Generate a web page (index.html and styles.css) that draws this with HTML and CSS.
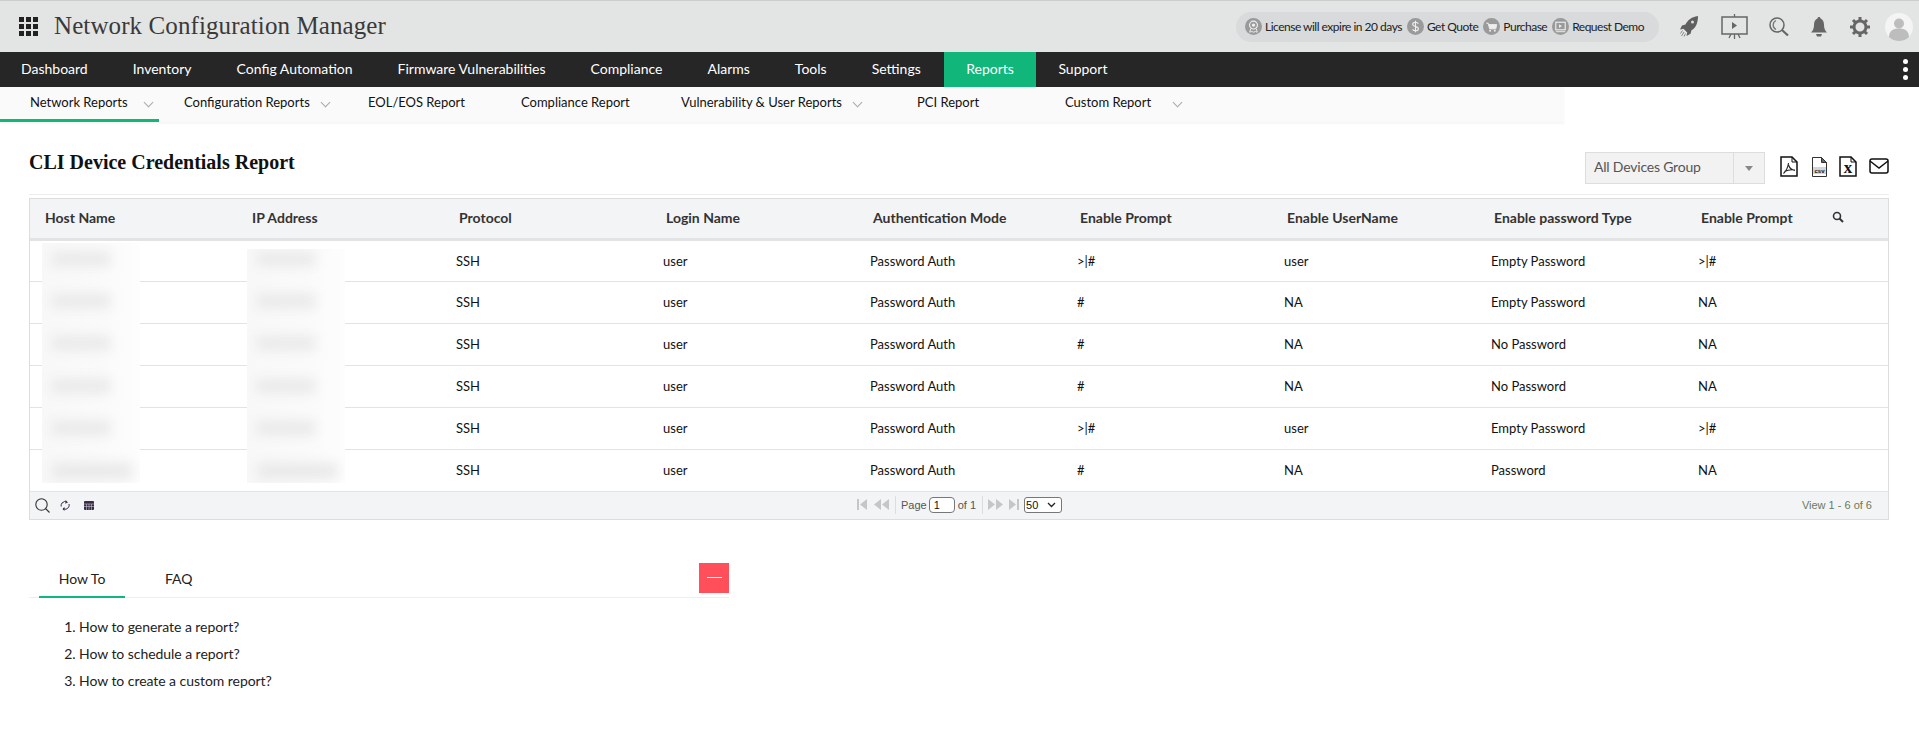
FILE: index.html
```html
<!DOCTYPE html>
<html lang="en">
<head>
  <meta charset="UTF-8">
  <title>CLI Device Credentials Report</title>
  <link rel="stylesheet" href="styles.css">
</head>
<body>
  <header class="topbar">
    <div class="brand">
      <div class="apps"><i></i><i></i><i></i><i></i><i></i><i></i><i></i><i></i><i></i></div>
      <span class="product">Network Configuration Manager</span>
    </div>
    <div class="top-right">
      <div class="pill">
        <span class="pill-item">
          <svg class="pill-ico" viewBox="0 0 18 18"><circle cx="9" cy="9" r="9" fill="#9a9a9a"/><circle cx="9" cy="7.5" r="4.2" fill="none" stroke="#eee" stroke-width="1.2"/><circle cx="9" cy="7.5" r="1.8" fill="#eee"/><path d="M6 11.5L5 15l2-.7L9 15l2-.7 2 .7-1-3.5" fill="none" stroke="#eee"/></svg>
          License will expire in 20 days
        </span>
        <span class="pill-item">
          <svg class="pill-ico" viewBox="0 0 18 18"><circle cx="9" cy="9" r="9" fill="#9a9a9a"/><path d="M12 6c-.5-1-1.600-1.500-3-1.500-1.700 0-3 .8-3 2.200 0 3 6 1.600 6 4.600 0 1.400-1.300 2.200-3 2.200-1.500 0-2.600-.6-3.100-1.700M9 3v12" fill="none" stroke="#eee" stroke-width="1.200"/></svg>
          Get Quote
        </span>
        <span class="pill-item">
          <svg class="pill-ico" viewBox="0 0 18 18"><circle cx="9" cy="9" r="9" fill="#9a9a9a"/><path d="M3.500 5.500h2l1.500 6h6.500l1-4.500H6" fill="#eee" stroke="#eee"/><circle cx="7.500" cy="13.500" r="1" fill="#eee"/><circle cx="12.500" cy="13.500" r="1" fill="#eee"/></svg>
          Purchase
        </span>
        <span class="pill-item">
          <svg class="pill-ico" viewBox="0 0 18 18"><circle cx="9" cy="9" r="9" fill="#9a9a9a"/><rect x="4" y="4.500" width="10" height="8" fill="none" stroke="#eee" stroke-width="1.200"/><path d="M7.500 6.500v4l3-2z" fill="#eee"/><path d="M4 14.500h10" stroke="#eee"/></svg>
          Request Demo
        </span>
      </div>
      <div class="tools">
        <svg class="tool-rocket" viewBox="0 0 18 21"><path d="M18 0C11 1 7.500 4.500 5.500 8.500L2 9.500 0 13.500l3.500-.7 3.700 3.700-.7 3.500 4-2.200 1-3.500C16 12 18 6.500 18 0z" fill="#5f5f5f"/><circle cx="12.500" cy="6" r="1.500" fill="#ddd"/><path d="M2.500 14.500L.5 17.500M4 16L1.500 20M5.500 17.500L4 20.500" stroke="#8a8a8a" fill="none"/></svg>
        <svg class="tool-screen" viewBox="0 0 27 25"><path d="M13.500 0v3M13.500 20v5M8 24l2-4M19 24l-2-4" stroke="#666" stroke-width="1.300" fill="none"/><rect x="1" y="3" width="25" height="17" fill="#e3e4e4" stroke="#666" stroke-width="1.500"/><path d="M11 8v7l5-3.500z" fill="#666"/></svg>
        <svg class="tool-search" viewBox="0 0 20 19"><circle cx="8" cy="8" r="7" fill="none" stroke="#666" stroke-width="1.500"/><path d="M7 3.500a5 5 0 0 0 0 9" fill="none" stroke="#777" stroke-width="1.300"/><path d="M13 13l6 5.500" stroke="#666" stroke-width="2.200"/></svg>
        <svg class="tool-bell" viewBox="0 0 16 20"><path d="M8 0c1 0 1.500.7 1.500 1.600C12 2.500 13 5 13 8c0 3.500 1 5.500 3 7.500H0c2-2 3-4 3-7.500 0-3 1-5.500 3.500-6.400C6.500.7 7 0 8 0z" fill="#666"/><path d="M5 17h6l-1 2.500H6z" fill="#666"/></svg>
        <svg class="tool-gear" viewBox="0 0 20 20"><circle cx="10" cy="10" r="6" fill="none" stroke="#666" stroke-width="3"/><path d="M10 0v4M10 16v4M0 10h4M16 10h4M3 3l3 3M14 14l3 3M17 3l-3 3M6 14l-3 3" stroke="#666" stroke-width="3"/></svg>
        <svg class="tool-avatar" viewBox="0 0 28 28"><circle cx="14" cy="14" r="14" fill="#f4f4f4"/><circle cx="14" cy="10.500" r="5" fill="#bdbdbd"/><path d="M4 24c0-6 4-8.500 10-8.500S24 18 24 24c-2.500 2.500-6 4-10 4s-7.500-1.500-10-4z" fill="#bdbdbd"/></svg>
      </div>
    </div>
  </header>

  <nav class="mainnav">
    <a>Dashboard</a>
    <a>Inventory</a>
    <a>Config Automation</a>
    <a>Firmware Vulnerabilities</a>
    <a>Compliance</a>
    <a>Alarms</a>
    <a>Tools</a>
    <a>Settings</a>
    <a class="active">Reports</a>
    <a>Support</a>
    <span class="more"><i></i><i></i><i></i></span>
  </nav>

  <nav class="subnav">
    <a class="active">Network Reports <span class="chev chev-wide"></span></a>
    <a>Configuration Reports <span class="chev"></span></a>
    <a>EOL/EOS Report</a>
    <a>Compliance Report</a>
    <a>Vulnerability &amp; User Reports <span class="chev"></span></a>
    <a>PCI Report</a>
    <a>Custom Report <span class="chev chev-far"></span></a>
  </nav>

  <main class="content">
    <div class="report-head">
      <h2>CLI Device Credentials Report</h2>
      <div class="report-actions">
        <div class="group-select"><span class="group-name">All Devices Group</span><span class="group-arrow"></span></div>
        <svg class="act-pdf" viewBox="0 0 18 21"><path d="M1 1h11l5 5v14H1z" fill="#fff" stroke="#111" stroke-width="1.500"/><path d="M12 1v5h5" fill="none" stroke="#111"/><path d="M8.500 7c-.5 4-2 7.500-5 10.500M8.500 9c1 3 3 5 6.500 5.500M4.500 15.500c3-1.500 6.500-2 10.500-1.500" fill="none" stroke="#222" stroke-width="1.100"/></svg>
        <svg class="act-csv" viewBox="0 0 15 20"><path d="M.5.5h9l5 5v14H.5z" fill="#fff" stroke="#333"/><path d="M9.500.5v5h5z" fill="#666" stroke="#333"/><rect x="1" y="10" width="13" height="7" fill="#d4d4d4"/><text x="7.500" y="15.800" class="csv-label">csv</text></svg>
        <svg class="act-xls" viewBox="0 0 18 21"><path d="M1 1h11l5 5v14H1z" fill="#fff" stroke="#111" stroke-width="1.500"/><path d="M12 1v5h5" fill="none" stroke="#111"/><text x="9" y="17" class="xls-label">x</text></svg>
        <svg class="act-mail" viewBox="0 0 20 16"><rect x="1" y="1" width="18" height="14" rx="2" fill="#fff" stroke="#111" stroke-width="1.500"/><path d="M1 3l9 7 9-7" fill="none" stroke="#111" stroke-width="1.500"/></svg>
      </div>
    </div>

    <div class="grid-wrap">
      <table class="grid">
        <colgroup>
          <col class="c-wide"><col class="c-wide"><col class="c-wide"><col class="c-wide">
          <col class="c-wide"><col class="c-wide"><col class="c-wide"><col class="c-wide">
          <col class="c-last"><col>
        </colgroup>
        <thead>
          <tr>
            <th>Host Name</th><th>IP Address</th><th>Protocol</th><th>Login Name</th><th>Authentication Mode</th>
            <th>Enable Prompt</th><th>Enable UserName</th><th>Enable password Type</th><th>Enable Prompt</th>
            <th><svg class="th-search" viewBox="0 0 12 12"><circle cx="5" cy="5" r="3.500" fill="none" stroke="#333" stroke-width="1.600"/><path d="M7.500 7.500L11 11" stroke="#333" stroke-width="2"/></svg></th>
          </tr>
        </thead>
        <tbody>
          <tr><td></td><td></td><td>SSH</td><td>user</td><td>Password Auth</td><td>&gt;|#</td><td>user</td><td>Empty Password</td><td>&gt;|#</td><td></td></tr>
          <tr><td></td><td></td><td>SSH</td><td>user</td><td>Password Auth</td><td>#</td><td>NA</td><td>Empty Password</td><td>NA</td><td></td></tr>
          <tr><td></td><td></td><td>SSH</td><td>user</td><td>Password Auth</td><td>#</td><td>NA</td><td>No Password</td><td>NA</td><td></td></tr>
          <tr><td></td><td></td><td>SSH</td><td>user</td><td>Password Auth</td><td>#</td><td>NA</td><td>No Password</td><td>NA</td><td></td></tr>
          <tr><td></td><td></td><td>SSH</td><td>user</td><td>Password Auth</td><td>&gt;|#</td><td>user</td><td>Empty Password</td><td>&gt;|#</td><td></td></tr>
          <tr><td></td><td></td><td>SSH</td><td>user</td><td>Password Auth</td><td>#</td><td>NA</td><td>Password</td><td>NA</td><td></td></tr>
        </tbody>
      </table>
      <div class="smudge smudge-host"><i></i><i></i><i></i><i></i><i></i><i></i></div>
      <div class="smudge smudge-ip"><i></i><i></i><i></i><i></i><i></i><i></i></div>

      <div class="pager">
        <div class="pager-left">
          <svg class="pg-search" viewBox="0 0 15 15"><circle cx="6.500" cy="6.500" r="5.700" fill="none" stroke="#333" stroke-width="1.100"/><path d="M10.500 10.500L14.500 14.500" stroke="#333" stroke-width="1.100"/></svg>
          <svg class="pg-refresh" viewBox="0 0 10 11"><path d="M2 3a4 4 0 0 1 5.500-.5M8.500 7.500A4 4 0 0 1 3 8.500M1.200 6.500A4 4 0 0 1 2 3M9 4a4 4 0 0 1-.5 3.500" fill="none" stroke="#3a2b45" stroke-width="1"/><path d="M5.500 0v4L7.500 2zM4.500 11V7L2.500 9z" fill="#3a2b45"/></svg>
          <svg class="pg-cols" viewBox="0 0 10 9"><rect width="10" height="9" rx="1" fill="#3a2b45"/><path d="M0 3h10M0 5.500h10M2.500 3v6M5 3v6M7.500 3v6" stroke="#c8c4cc" stroke-width=".6"/></svg>
        </div>
        <div class="pager-mid">
          <svg class="pg-nav" viewBox="0 0 10 11"><rect x="0" y="0" width="2" height="11" fill="#c4c6c8"/><path d="M10 0v11L3 5.500z" fill="#c4c6c8"/></svg>
          <svg class="pg-nav pg-nav-wide" viewBox="0 0 15 11"><path d="M7 0v11L0 5.500zM15 0v11L8 5.500z" fill="#c4c6c8"/></svg>
          <span class="pg-sep"></span>
          <span>Page</span>
          <span class="pg-input">1</span>
          <span class="pg-of">of 1</span>
          <span class="pg-sep"></span>
          <svg class="pg-nav pg-nav-wide" viewBox="0 0 15 11"><path d="M0 0v11l7-5.500zM8 0v11l7-5.500z" fill="#c4c6c8"/></svg>
          <svg class="pg-nav" viewBox="0 0 10 11"><path d="M0 0v11l7-5.500z" fill="#c4c6c8"/><rect x="8" y="0" width="2" height="11" fill="#c4c6c8"/></svg>
          <span class="pg-size">50<svg viewBox="0 0 9 6"><path d="M1 1l3.500 3.500L8 1" fill="none" stroke="#222" stroke-width="1.300"/></svg></span>
        </div>
        <div class="pager-right">View 1 - 6 of 6</div>
      </div>
    </div>

    <section class="help">
      <div class="help-tabs">
        <a class="active">How To</a>
        <a>FAQ</a>
        <span class="collapse"><i></i></span>
      </div>
      <ol class="help-list">
        <li>How to generate a report?</li>
        <li>How to schedule a report?</li>
        <li>How to create a custom report?</li>
      </ol>
    </section>
  </main>
</body>
</html>
```

FILE: styles.css
```css
* { box-sizing: border-box; }
html, body { margin: 0; padding: 0; }
body { font-family: "Lato", sans-serif; font-size: 14px; color: #222; background: #fff; height: 731px; overflow: hidden; }
a { display: block; }

/* top bar */
.topbar { height: 52px; background: #e3e4e4; border-top: 1px solid #ccc; display: flex; justify-content: space-between; align-items: center; }
.brand { display: flex; align-items: center; padding-left: 19px; }
.apps { display: grid; grid-template-columns: repeat(3, 5px); grid-gap: 2px; width: 19px; margin-right: 16px; }
.apps i { display: block; width: 5px; height: 5px; background: #222; }
.product { font-family: "Liberation Serif", serif; font-size: 25px; line-height: 27px; margin-bottom: 2px; color: #3a3a3a; letter-spacing: .1px; }
.top-right { display: flex; align-items: center; }
.pill { width: 423px; height: 30px; margin-right: 21px; padding-left: 9px; background: #d8dadb; border-radius: 15px; display: flex; align-items: center; font-size: 12px; color: #222; letter-spacing: -.5px; }
.pill-item { display: flex; align-items: center; margin-right: 5px; white-space: nowrap; }
.pill-ico { width: 17px; height: 17px; margin-right: 3px; }
.tools { display: flex; align-items: center; }
.tools svg { display: block; }
.tool-rocket { width: 18px; height: 21px; margin-right: 23px; }
.tool-screen { width: 27px; height: 25px; margin-right: 21px; }
.tool-search { width: 20px; height: 19px; margin-right: 22px; }
.tool-bell { width: 16px; height: 20px; margin-right: 23px; }
.tool-gear { width: 20px; height: 20px; margin-right: 15px; }
.tool-avatar { width: 28px; height: 28px; margin-right: 6px; }

/* main nav */
.mainnav { height: 35px; background: #262626; display: flex; align-items: stretch; padding-left: 21px; position: relative; }
.mainnav a { color: #fff; font-size: 14px; line-height: 34px; margin-right: 45px; }
.mainnav a.active { background: #10b67a; margin: 0 22px 0 -22px; padding: 0 22.500px; }
.more { position: absolute; right: 11px; top: 7px; display: flex; flex-direction: column; gap: 3px; }
.more i { display: block; width: 5px; height: 5px; border-radius: 50%; background: #fff; }

/* sub nav */
.subnav { height: 35px; width: 1564px; background: #fafafa; display: grid; grid-template-columns: 159px 184px 153px 160px 236px 148px 1fr; box-shadow: 0 2px 2px rgba(0,0,0,.04); }
.subnav a { padding-left: 25px; line-height: 31px; font-size: 13px; color: #111; white-space: nowrap; height: 35px; }
.subnav a:first-child { padding-left: 30px; }
.subnav a.active { border-bottom: 3px solid #10b67a; }
.chev { display: inline-block; width: 7px; height: 7px; margin: 0 0 1px 9px; border-right: 1px solid #aaa; border-bottom: 1px solid #aaa; transform: rotate(45deg); }
.chev-wide { margin-left: 14px; }
.chev-far { margin-left: 20px; }

/* report header */
.content { padding: 0 30px 0 29px; }
.report-head { height: 73px; display: flex; justify-content: space-between; padding-top: 29px; border-bottom: 1px solid #eee; }
.report-head h2 { margin: 0; font-family: "Liberation Serif", serif; font-size: 20px; font-weight: bold; color: #111; line-height: 22px; }
.report-actions { display: flex; align-items: flex-start; margin-top: 1px; }
.report-actions svg { display: block; }
.group-select { width: 180px; height: 32px; background: #f2f2f2; border: 1px solid #ddd; display: flex; align-items: center; margin-right: 15px; }
.group-name { width: 148px; padding-left: 8px; line-height: 28px; height: 30px; border-right: 1px solid #ddd; color: #555; letter-spacing: -.2px; }
.group-arrow { width: 0; height: 0; margin-left: 11px; border: 4px solid transparent; border-top: 5px solid #888; border-bottom: 0; }
.act-pdf { width: 18px; height: 21px; margin: 4px 14px 0 0; }
.act-csv { width: 15px; height: 20px; margin: 5px 12px 0 0; }
.act-xls { width: 18px; height: 21px; margin: 4px 12px 0 0; }
.act-mail { width: 20px; height: 16px; margin-top: 6px; }
.csv-label { font-family: "Liberation Sans", sans-serif; font-size: 6px; font-weight: bold; fill: #111; text-anchor: middle; }
.xls-label { font-family: "Liberation Serif", serif; font-size: 17px; font-weight: bold; fill: #111; text-anchor: middle; }

/* grid */
.grid-wrap { position: relative; margin-top: 3px; border: 1px solid #ddd; }
.grid { width: 100%; border-collapse: collapse; table-layout: fixed; }
.c-wide { width: 207px; }
.c-last { width: 131px; }
.grid th { height: 40px; background: #f3f4f6; border-bottom: 3px solid #e2e3e5; text-align: left; padding: 0 0 2px 15px; font-size: 14px; font-weight: bold; color: #333; white-space: nowrap; }
.grid td { height: 42px; border-bottom: 1px solid #e2e3e5; padding: 0 0 0 12px; font-size: 13px; color: #111; white-space: nowrap; }
.th-search { display: block; width: 12px; height: 12px; }

/* blurred out host names and addresses */
.smudge { position: absolute; width: 98px; overflow: hidden; background: linear-gradient(90deg, #f8f8f8, #fafafa 60%, #fdfdfd); display: flex; flex-direction: column; justify-content: space-between; padding-bottom: 4px; }
.smudge i { display: block; width: 58px; height: 14px; margin-left: 10px; background: #e9e9e9; filter: blur(6px); }
.smudge i:last-child { width: 80px; height: 16px; }
.smudge-host { left: 12px; top: 44px; height: 240px; padding-top: 9px; }
.smudge-ip { left: 217px; top: 50px; height: 234px; padding-top: 3px; }

/* pager */
.pager { height: 27px; background: #f3f4f6; display: flex; align-items: center; position: relative; font-family: "Liberation Sans", sans-serif; font-size: 11px; color: #555; }
.pager-left { display: flex; align-items: center; padding-left: 5px; }
.pager-left svg { display: block; }
.pg-search { width: 15px; height: 15px; margin-right: 10px; }
.pg-refresh { width: 10px; height: 11px; margin-right: 14px; }
.pg-cols { width: 10px; height: 9px; }
.pager-mid { position: absolute; left: 827px; top: 3px; height: 20px; display: flex; align-items: center; }
.pg-nav { width: 10px; height: 11px; margin-right: 7px; }
.pg-nav-wide { width: 15px; margin-right: 6px; }
.pg-sep { width: 1px; height: 18px; background: #ddd; margin-right: 5px; }
.pg-input { width: 26px; height: 16px; margin: 0 3px 0 2px; padding-left: 4px; line-height: 14px; color: #111; background: #fff; border: 1px solid #777; border-radius: 4px; }
.pg-of { margin-right: 6px; }
.pg-size { position: relative; width: 38px; height: 16px; padding-left: 1px; line-height: 14px; color: #111; background: #fff; border: 1px solid #777; border-radius: 3px; margin-left: -2px; }
.pg-size svg { position: absolute; right: 5px; top: 4px; width: 9px; height: 6px; }
.pager-right { margin-left: auto; padding-right: 16px; font-size: 11px; color: #6b7a5b; }

/* help */
.help { width: 700px; margin-top: 43px; }
.help-tabs { display: flex; height: 35px; border-bottom: 1px solid #eee; position: relative; padding-left: 10px; }
.help-tabs a { height: 35px; line-height: 32px; text-align: center; color: #222; }
.help-tabs a.active { width: 86px; border-bottom: 2px solid #10b67a; }
.help-tabs a + a { margin-left: 40px; }
.collapse { position: absolute; right: 0; top: 0; width: 30px; height: 30px; background: #ff4f5b; display: flex; align-items: center; justify-content: center; }
.collapse i { display: block; width: 15px; height: 1px; background: #fff; }
.help-list { margin: 15px 0 0; padding: 0 0 0 50px; }
.help-list li { height: 27px; line-height: 27px; color: #222; letter-spacing: -.05px; }
```
